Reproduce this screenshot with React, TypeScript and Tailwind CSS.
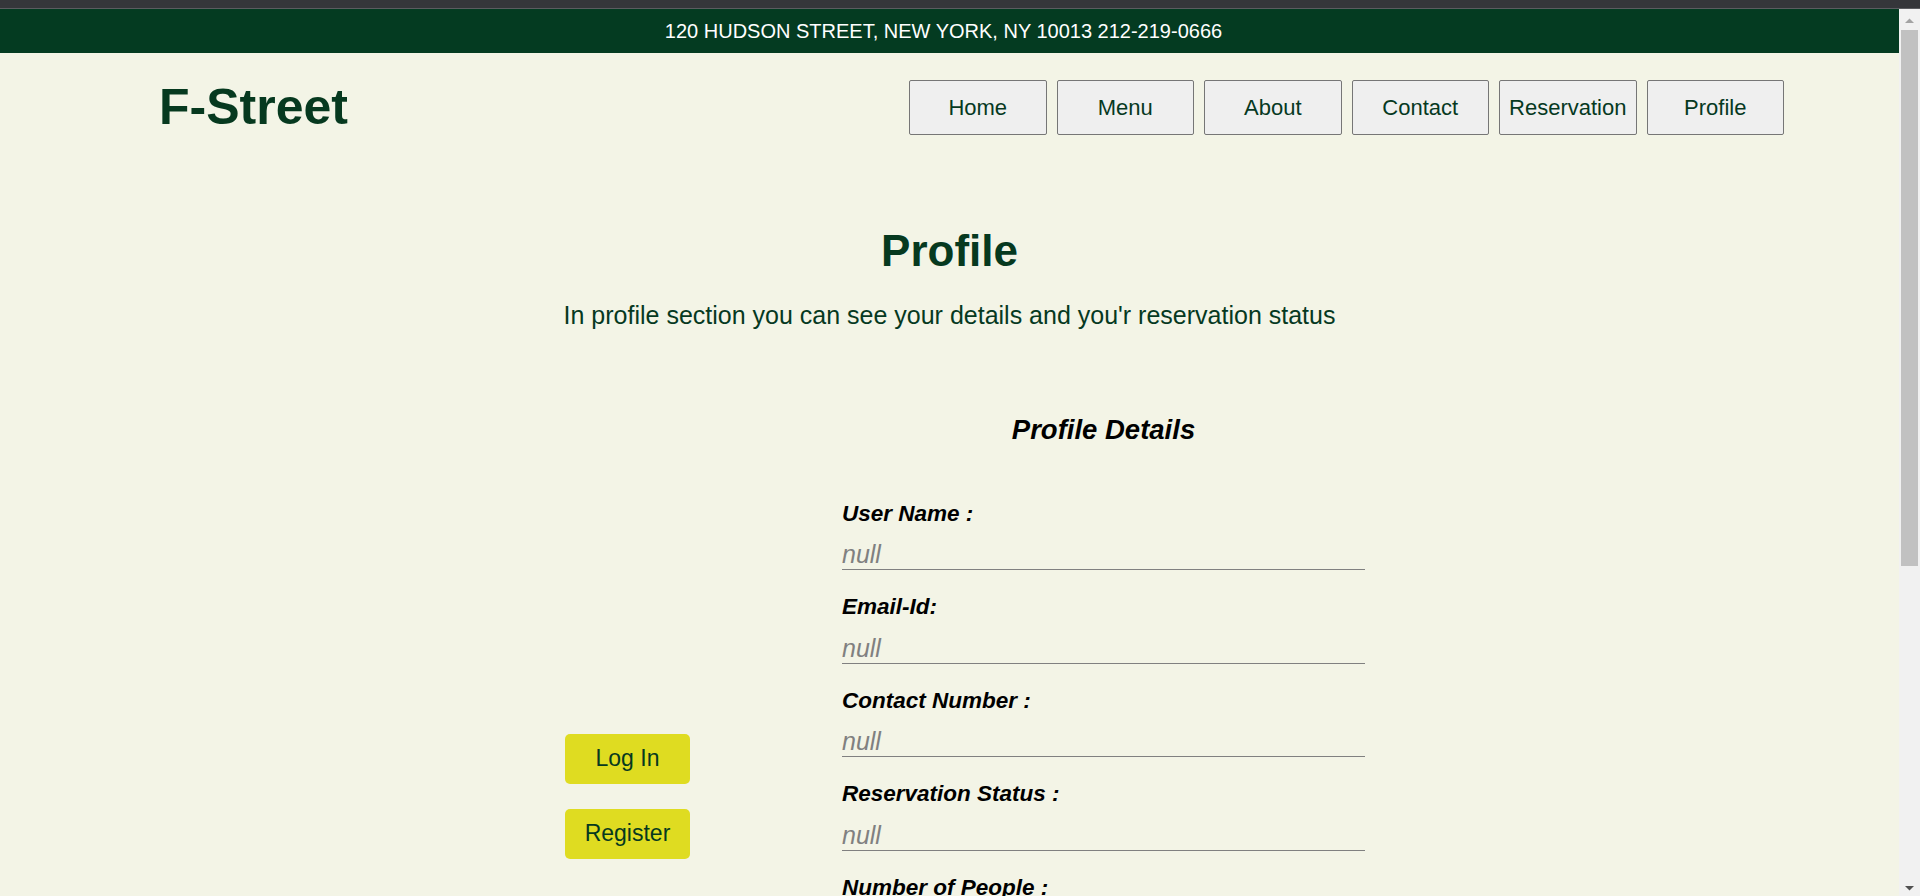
const navItems = ['Home', 'Menu', 'About', 'Contact', 'Reservation', 'Profile'];

const fields = [
  { label: 'User Name :', value: 'null' },
  { label: 'Email-Id:', value: 'null' },
  { label: 'Contact Number :', value: 'null' },
  { label: 'Reservation Status :', value: 'null' },
  { label: 'Number of People :', value: 'null' },
  { label: 'Reservation Date :', value: 'null' },
];

const Scrollbar = () => (
  <div className="w-[21px] bg-[#f1f1f1] flex flex-col items-center">
    <svg width="9" height="6" viewBox="0 0 9 6" className="mt-[9px] mb-[6px]">
      <polygon points="0,5 4.5,0.5 9,5" fill="#a3a3a3" />
    </svg>
    <div className="w-[17px] h-[536px] bg-[#c1c1c1]" />
    <div className="flex-1" />
    <svg width="9" height="6" viewBox="0 0 9 6" className="mb-[5px]">
      <polygon points="0,1 4.5,5.5 9,1" fill="#505050" />
    </svg>
  </div>
);

const App = () => {
  return (
    <div className="h-[896px] flex flex-col overflow-hidden font-['Liberation_Sans',Arial,sans-serif]">
      <div className="h-[8px] bg-[#35363a]" />
      <div className="h-px bg-[#5b5c60]" />
      <div className="flex flex-1 min-h-0">
        <div className="flex-1 bg-[#f3f4e6] overflow-hidden">
          <div className="h-[44px] bg-[#043b21] flex items-center justify-center text-white text-[20px] pr-[12px]">
            120 HUDSON STREET, NEW YORK, NY 10013 212-219-0666
          </div>

          <header className="flex items-center justify-between pl-[159px] pr-[115px] pt-[26px]">
            <h1 className="text-[50px] font-bold text-[#06391f] leading-[1.149]">F-Street</h1>
            <nav className="flex gap-[10px]">
              {navItems.map((item) => (
                <button
                  key={item}
                  className="w-[137.5px] h-[55px] bg-[#efefef] border border-[#767676] rounded-[2px] text-[22px] text-[#06391f]"
                >
                  {item}
                </button>
              ))}
            </nav>
          </header>

          <section className="text-center text-[#06391f] mt-[90px]">
            <h2 className="text-[44px] font-bold leading-[1.149]">Profile</h2>
            <p className="text-[25px] leading-[1.149] mt-[24px]">
              In profile section you can see your details and you'r reservation status
            </p>
          </section>

          <div className="flex pl-[565px] mt-[84px]">
            <div className="w-[125px] flex flex-col gap-[25px] mt-[320px]">
              <button className="h-[50px] rounded-[5px] bg-[#dfdc21] text-[23px] text-[#06391f]">Log In</button>
              <button className="h-[50px] rounded-[5px] bg-[#dfdc21] text-[23px] text-[#06391f]">Register</button>
            </div>
            <div className="w-[523px] ml-[152px]">
              <h3 className="text-[27.5px] font-bold italic text-black text-center leading-[1.149]">Profile Details</h3>
              <div className="mt-[55.5px] flex flex-col gap-[24px]">
                {fields.map((f) => (
                  <div key={f.label}>
                    <label className="block text-[22.5px] font-bold italic text-black leading-[1.149]">{f.label}</label>
                    <input
                      readOnly
                      placeholder={f.value}
                      className="mt-[13.5px] block w-full bg-transparent border-b border-[#808080] pb-[0.5px] text-[25px] italic leading-[1.149] placeholder:text-[#808080] outline-none"
                    />
                  </div>
                ))}
              </div>
            </div>
          </div>
        </div>
        <Scrollbar />
      </div>
    </div>
  );
};

export default App;
